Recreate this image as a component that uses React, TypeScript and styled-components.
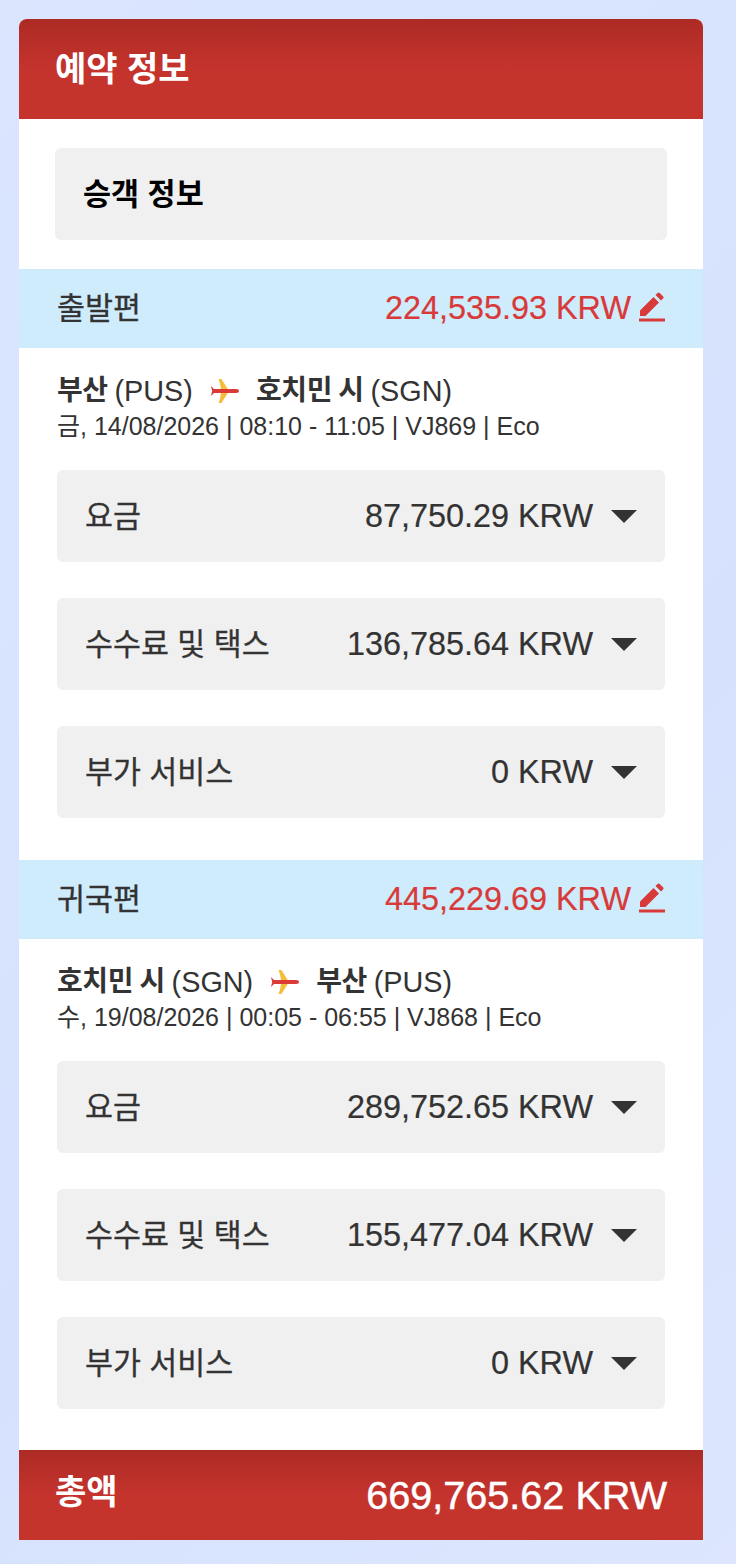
import React from "react";
import styled, { createGlobalStyle } from "styled-components";

const Global = createGlobalStyle`
  html, body { margin: 0; padding: 0; }
  body {
    background: linear-gradient(135deg, #dbe5fe 0%, #d6e2fd 60%, #dde6fe 100%);
    font-family: "Liberation Sans", "Noto Sans CJK KR", sans-serif;
    color: #333;
  }
`;
const Page = styled.div`
  width: 736px;
  height: 1564px;
  padding: 19px 33px 24px 19px;
  box-sizing: border-box;
`;
const Card = styled.div`
  background: #fff;
  border-radius: 8px 8px 0 0;
  overflow: hidden;
  height: 1521px;
  display: flex;
  flex-direction: column;
`;
const RedBar = styled.div<{ $h: number }>`
  height: ${(p) => p.$h}px;
  flex: none;
  background: linear-gradient(180deg, #ad2b25 0%, #c5332d 50%, #c5332d 100%);
  color: #fff;
  display: flex;
  align-items: center;
  justify-content: space-between;
  padding: 0 36px;
  box-sizing: border-box;
  font-weight: 700;
`;
const Title = styled.div`
  font-size: 34px;
  padding-bottom: 6px;
`;
const Total = styled.div`
  font-size: 39.6px;
  font-weight: 400;
  -webkit-text-stroke: 0.5px #fff;
`;
const TotalLabel = styled.div`
  font-size: 34px;
  padding-bottom: 12px;
`;
const Passenger = styled.div`
  margin: 29px 36px;
  height: 92px;
  background: #f0f0f0;
  border-radius: 6px;
  display: flex;
  align-items: center;
  padding: 0 28px 4px;
  box-sizing: border-box;
  font-size: 30.5px;
  font-weight: 700;
  color: #000;
  flex: none;
`;
const SectionBar = styled.div`
  height: 79px;
  flex: none;
  background: #cfecfc;
  display: flex;
  align-items: center;
  justify-content: space-between;
  padding: 0 38px;
`;
const SectionTitle = styled.div`
  font-size: 30.4px;
  padding-bottom: 5px;
  -webkit-text-stroke: 0.3px #333;
`;
const Price = styled.div`
  display: flex;
  align-items: center;
  gap: 8px;
  color: #d83a3a;
  font-size: 32.4px;
  -webkit-text-stroke: 0.2px #d83a3a;
  svg { margin-bottom: 4px; }
`;
const Flight = styled.div`
  padding: 25px 38px 0;
  height: 122px;
  flex: none;
  box-sizing: border-box;
`;
const Route = styled.div`
  display: flex;
  align-items: center;
  font-size: 28px;
  line-height: 36px;
  svg { margin: 0 17px 0 18px; }
`;
const Place = styled.b`
  font-weight: 700;
  letter-spacing: -0.4px;
  word-spacing: -1px;
`;
const Code = styled.span`
  font-size: 28.8px;
  margin-left: -1px;
`;
const Meta = styled.div`
  font-size: 25px;
  line-height: 35px;
`;
const Rows = styled.div`
  display: flex;
  flex-direction: column;
  gap: 36px;
  padding: 0 38px;
  flex: none;
`;
const Row = styled.div`
  height: 92px;
  background: #f0f0f0;
  border-radius: 6px;
  display: flex;
  align-items: center;
  justify-content: space-between;
  padding: 0 28px;
`;
const RowLabel = styled.div`
  font-size: 30.4px;
  padding-bottom: 5px;
  -webkit-text-stroke: 0.3px #333;
`;
const RowValue = styled.div`
  display: flex;
  align-items: center;
  gap: 18px;
  font-size: 32.4px;
  -webkit-text-stroke: 0.2px #333;
`;
const Caret = styled.span`
  width: 0;
  height: 0;
  border-left: 13px solid transparent;
  border-right: 13px solid transparent;
  border-top: 13px solid #333;
`;
const Gap = styled.div<{ $h: number }>`
  height: ${(p) => p.$h}px;
  flex: none;
`;

const Pen = () => (
  <svg width="26" height="30" viewBox="0 0 26 30">
    <path fill="#d83a3a" d="M1 18.5 14.500 5l5.500 5.500L6.500 24H1zM16.500 3l2-2a1.600 1.600 0 0 1 2.200 0l3.300 3.300a1.600 1.600 0 0 1 0 2.200l-2 2z" />
    <rect x="0" y="26.500" width="26" height="3" fill="#d83a3a" />
  </svg>
);
const Plane = () => (
  <svg width="28" height="24" viewBox="0 0 28 24">
    <path fill="#f5bd3c" d="M7.500 0h3l7.500 12-7.500 12h-3c1.500-4 2.500-8 2.500-12S9 4 7.500 0z" />
    <path fill="#dc3a36" d="M0 7l3 3h22c2 0 3 .8 3 2s-1 2-3 2H3l-3 3 1.200-5z" />
  </svg>
);

const Item = ({ label, value }: { label: string; value: string }) => (
  <Row>
    <RowLabel>{label}</RowLabel>
    <RowValue>
      {value}
      <Caret />
    </RowValue>
  </Row>
);

const Leg = (p: { title: string; price: string; from: [string, string]; to: [string, string]; meta: string; fare: string; fee: string }) => (
  <>
    <SectionBar>
      <SectionTitle>{p.title}</SectionTitle>
      <Price>
        {p.price}
        <Pen />
      </Price>
    </SectionBar>
    <Flight>
      <Route>
        <Place>{p.from[0]}</Place>&nbsp;<Code>{p.from[1]}</Code>
        <Plane />
        <Place>{p.to[0]}</Place>&nbsp;<Code>{p.to[1]}</Code>
      </Route>
      <Meta>{p.meta}</Meta>
    </Flight>
    <Rows>
      <Item label="요금" value={p.fare} />
      <Item label="수수료 및 택스" value={p.fee} />
      <Item label="부가 서비스" value="0 KRW" />
    </Rows>
  </>
);

export default function App() {
  return (
    <Page>
      <Global />
      <Card>
        <RedBar $h={100}>
          <Title>예약 정보</Title>
        </RedBar>
        <Passenger>승객 정보</Passenger>
        <Leg
          title="출발편"
          price="224,535.93 KRW"
          from={["부산", "(PUS)"]}
          to={["호치민 시", "(SGN)"]}
          meta="금, 14/08/2026 | 08:10 - 11:05 | VJ869 | Eco"
          fare="87,750.29 KRW"
          fee="136,785.64 KRW"
        />
        <Gap $h={42} />
        <Leg
          title="귀국편"
          price="445,229.69 KRW"
          from={["호치민 시", "(SGN)"]}
          to={["부산", "(PUS)"]}
          meta="수, 19/08/2026 | 00:05 - 06:55 | VJ868 | Eco"
          fare="289,752.65 KRW"
          fee="155,477.04 KRW"
        />
        <Gap $h={41} />
        <RedBar $h={90}>
          <TotalLabel>총액</TotalLabel>
          <Total>669,765.62 KRW</Total>
        </RedBar>
      </Card>
    </Page>
  );
}
